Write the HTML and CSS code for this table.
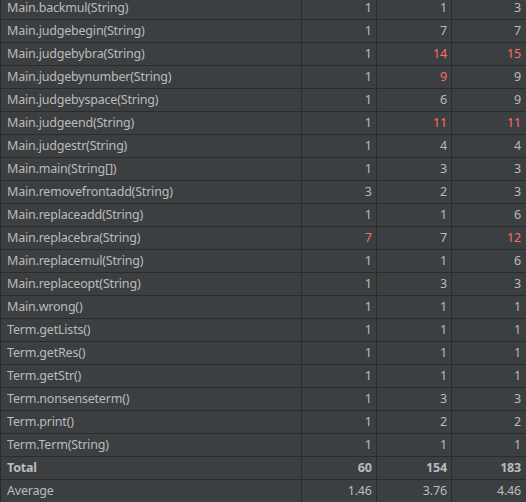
FILE: index.html
```html
<!DOCTYPE html>
<html>
<head>
<meta charset="utf-8">
<link rel="stylesheet" href="styles.css">
</head>
<body>
<table class="metrics">
<colgroup><col class="c-name"><col class="c-num"><col class="c-num"><col class="c-num"></colgroup>
<tbody>
<tr><td>Main.backmul(String)</td><td>1</td><td>1</td><td>3</td></tr>
<tr><td>Main.judgebegin(String)</td><td>1</td><td>7</td><td>7</td></tr>
<tr><td>Main.judgebybra(String)</td><td>1</td><td class="bad">14</td><td class="bad">15</td></tr>
<tr><td>Main.judgebynumber(String)</td><td>1</td><td class="bad">9</td><td>9</td></tr>
<tr><td>Main.judgebyspace(String)</td><td>1</td><td>6</td><td>9</td></tr>
<tr><td>Main.judgeend(String)</td><td>1</td><td class="bad">11</td><td class="bad">11</td></tr>
<tr><td>Main.judgestr(String)</td><td>1</td><td>4</td><td>4</td></tr>
<tr><td>Main.main(String[])</td><td>1</td><td>3</td><td>3</td></tr>
<tr><td>Main.removefrontadd(String)</td><td>3</td><td>2</td><td>3</td></tr>
<tr><td>Main.replaceadd(String)</td><td>1</td><td>1</td><td>6</td></tr>
<tr><td>Main.replacebra(String)</td><td class="bad">7</td><td>7</td><td class="bad">12</td></tr>
<tr><td>Main.replacemul(String)</td><td>1</td><td>1</td><td>6</td></tr>
<tr><td>Main.replaceopt(String)</td><td>1</td><td>3</td><td>3</td></tr>
<tr><td>Main.wrong()</td><td>1</td><td>1</td><td>1</td></tr>
<tr><td>Term.getLists()</td><td>1</td><td>1</td><td>1</td></tr>
<tr><td>Term.getRes()</td><td>1</td><td>1</td><td>1</td></tr>
<tr><td>Term.getStr()</td><td>1</td><td>1</td><td>1</td></tr>
<tr><td>Term.nonsenseterm()</td><td>1</td><td>3</td><td>3</td></tr>
<tr><td>Term.print()</td><td>1</td><td>2</td><td>2</td></tr>
<tr><td>Term.Term(String)</td><td>1</td><td>1</td><td>1</td></tr>
<tr class="total"><td>Total</td><td>60</td><td>154</td><td>183</td></tr>
<tr><td>Average</td><td>1.46</td><td>3.76</td><td>4.46</td></tr>
</tbody>
</table>
</body>
</html>
```
FILE: styles.css
```css
html, body {
  margin: 0;
  padding: 0;
  background: #3c3f41;
  overflow: hidden;
}
.metrics {
  border-collapse: collapse;
  table-layout: fixed;
  width: 527px;
  margin-top: -3px;
  font-family: "Noto Sans", "Noto Sans CJK SC", sans-serif;
  font-size: 12.5px;
  letter-spacing: -0.2px;
  color: #bbbbbb;
}
.c-name { width: 300px; }
.c-num { width: 75px; }
.metrics td {
  height: 22px;
  padding: 0 4px 0 6px;
  border: 1px solid #2b2b2b;
  white-space: nowrap;
  text-align: right;
  line-height: 22px;
  box-sizing: border-box;
}
.metrics td:first-child { text-align: left; }
.metrics td:last-child { padding-right: 5px; }
.metrics tr:first-child td { border-top: 0; }
.metrics .bad { color: #ff6b68; }
.metrics .total td { font-weight: bold; }
```
